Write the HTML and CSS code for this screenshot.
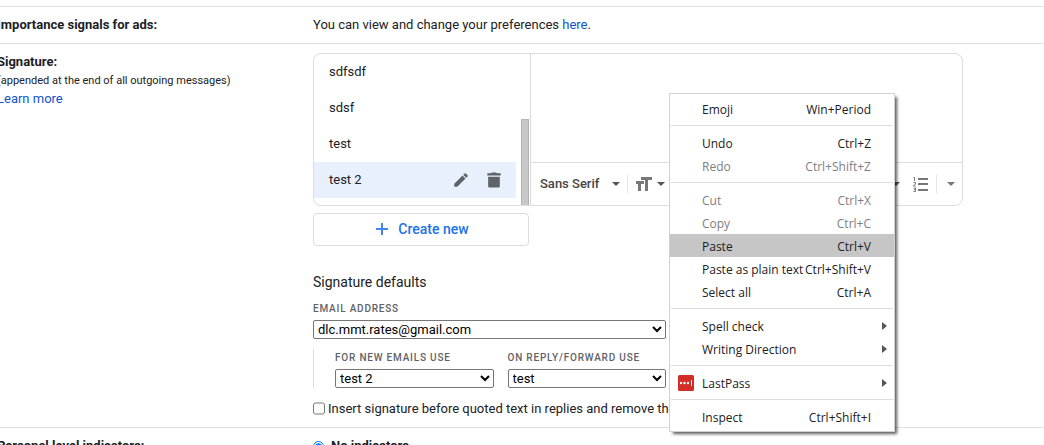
FILE: index.html
```html
<!DOCTYPE html>
<html lang="en">
<head>
    <meta charset="UTF-8">
    <meta name="viewport" content="width=device-width, initial-scale=1.0">
    <title>Settings</title>
    <link rel="stylesheet" href="styles.css">
</head>
<body>
    <main class="settings">
        <section class="row">
            <h2 class="row-title">Importance signals for ads:</h2>
            <p class="row-text">You can view and change your preferences <a href="#">here</a>.</p>
        </section>

        <section class="row row-signature">
            <div class="row-label">
                <h2 class="row-title">Signature:</h2>
                <p class="hint">(appended at the end of all outgoing messages)</p>
                <a href="#">Learn more</a>
            </div>
            <div class="row-content">
                <div class="signature-box">
                    <div class="signature-side">
                        <ul class="signature-list">
                            <li>sdfsdf</li>
                            <li>sdsf</li>
                            <li>test</li>
                            <li class="selected">
                                <span>test 2</span>
                                <button class="icon-btn" type="button" aria-label="Edit">
                                    <svg width="18" height="18" viewBox="0 0 24 24"><path d="M3 17v4h4L18 10l-4-4L3 17zM20.700 7.300a1.200 1.200 0 0 0 0-1.700l-2.300-2.300a1.200 1.200 0 0 0-1.700 0L15 5l4 4 1.700-1.700z"/></svg>
                                </button>
                                <button class="icon-btn" type="button" aria-label="Delete">
                                    <svg width="20" height="20" viewBox="0 0 24 24"><path d="M5 8v11.500c0 .9.700 1.500 1.500 1.500h11c.8 0 1.500-.6 1.500-1.500V8z"/><path d="M15.500 4l-1-1h-5l-1 1H4v2.500h16V4z"/></svg>
                                </button>
                            </li>
                        </ul>
                        <div class="scrollbar"></div>
                    </div>
                    <div class="editor">
                        <div class="editor-text" contenteditable="true" spellcheck="false"></div>
                        <div class="toolbar">
                            <div class="tools">
                                <button class="tool font-tool" type="button">Sans Serif <i class="caret"></i></button>
                                <span class="divider"></span>
                                <button class="tool" type="button" aria-label="Size">
                                    <svg width="16" height="14" viewBox="0 0 16 14"><path d="M5 0h11v3h-4v11H9V3H5zM0 4h8v3H5v7H2V7H0z"/></svg>
                                    <i class="caret"></i>
                                </button>
                            </div>
                            <div class="tools">
                                <button class="tool" type="button" aria-label="Align"><i class="caret"></i></button>
                                <button class="tool list-tool" type="button" aria-label="Numbered list">
                                    <svg width="16" height="15" viewBox="0 0 16 15"><path d="M5 1h10v2H5zM5 6h10v2H5zM5 12h10v2H5z"/><path class="digits" d="M.5 .5h1V4M.5 5.500h2v1.500l-2 2h2.200M.5 11h2v3.500h-2M1 12.700h1.500"/></svg>
                                </button>
                                <span class="divider"></span>
                                <button class="tool" type="button" aria-label="More options"><i class="caret light"></i></button>
                            </div>
                        </div>
                    </div>
                </div>
                <button class="create-btn" type="button">
                    <svg width="12" height="12" viewBox="0 0 12 12"><path d="M6 0v12M0 6h12"/></svg>
                    Create new
                </button>

                <h3 class="defaults-title">Signature defaults</h3>
                <div class="defaults">
                    <div class="field">
                        <label for="email">EMAIL ADDRESS</label>
                        <select id="email"><option>dlc.mmt.rates@gmail.com</option></select>
                    </div>
                    <div class="usage">
                        <div class="field">
                            <label for="newUse">FOR NEW EMAILS USE</label>
                            <select id="newUse"><option>test 2</option></select>
                        </div>
                        <div class="field">
                            <label for="replyUse">ON REPLY/FORWARD USE</label>
                            <select id="replyUse"><option>test</option></select>
                        </div>
                    </div>
                </div>
                <label class="check">
                    <input type="checkbox">
                    Insert signature before quoted text in replies and remove the
                </label>
            </div>
        </section>

        <section class="row">
            <h2 class="row-title">Personal level indicators:</h2>
            <label class="radio"><input type="radio" name="indicators" checked> No indicators</label>
        </section>
    </main>

    <div class="menu" role="menu">
        <button role="menuitem">Emoji <kbd>Win+Period</kbd></button>
        <hr>
        <button role="menuitem">Undo <kbd>Ctrl+Z</kbd></button>
        <button role="menuitem" disabled>Redo <kbd>Ctrl+Shift+Z</kbd></button>
        <hr>
        <button role="menuitem" disabled>Cut <kbd>Ctrl+X</kbd></button>
        <button role="menuitem" disabled>Copy <kbd>Ctrl+C</kbd></button>
        <button role="menuitem" class="active">Paste <kbd>Ctrl+V</kbd></button>
        <button role="menuitem">Paste as plain text <kbd>Ctrl+Shift+V</kbd></button>
        <button role="menuitem">Select all <kbd>Ctrl+A</kbd></button>
        <hr>
        <button role="menuitem" class="submenu">Spell check</button>
        <button role="menuitem" class="submenu">Writing Direction</button>
        <hr>
        <button role="menuitem" class="submenu with-icon">
            <svg width="16" height="16" viewBox="0 0 16 16"><rect width="16" height="16" rx="1.500" fill="#d32d27"/><g fill="#fff"><circle cx="3" cy="8" r="1.200"/><circle cx="6.500" cy="8" r="1.200"/><circle cx="10" cy="8" r="1.200"/><rect x="13" y="5" width="1" height="6"/></g></svg>
            LastPass
        </button>
        <hr>
        <button role="menuitem">Inspect <kbd>Ctrl+Shift+I</kbd></button>
    </div>
</body>
</html>
```
FILE: styles.css
```css
* {
    box-sizing: border-box;
}
body {
    margin: 0;
    height: 100vh;
    overflow: hidden;
    background: #fff;
    color: #202124;
    font-family: Roboto, Arial, sans-serif;
    font-size: 13px;
    line-height: 18px;
}
h2, h3, p, ul {
    margin: 0;
    padding: 0;
}
a {
    color: #15c;
    text-decoration: none;
}
button {
    margin: 0;
    padding: 0;
    border: 0;
    background: none;
    color: inherit;
    font: inherit;
}
svg {
    display: block;
}

/* settings rows */
.settings {
    padding-top: 6px;
    margin-left: -3px;
}
.row {
    display: grid;
    grid-template-columns: 316px 1fr;
    border-top: 1px solid #e0e0e0;
    padding: 9px 0;
}
.row-title {
    font-size: 13px;
    font-weight: 700;
}
.hint {
    font-size: 11px;
    line-height: 19px;
}
.row-content {
    max-width: 650px;
}

/* signature editor */
.signature-box {
    display: flex;
    height: 153px;
    border: 1px solid #dadce0;
    border-radius: 8px;
    overflow: hidden;
}
.signature-side {
    display: flex;
    justify-content: space-between;
    width: 217px;
    border-right: 1px solid #dadce0;
}
.signature-list {
    width: 202px;
    list-style: none;
}
.signature-list li {
    display: flex;
    align-items: center;
    height: 36px;
    padding: 0 12px 0 15px;
    font-size: 13px;
}
.signature-list span {
    flex: 1;
}
.selected {
    background: #e8f0fe;
}
.icon-btn {
    display: flex;
    justify-content: center;
    width: 20px;
    margin-left: 13px;
    fill: #5f6368;
}
.scrollbar {
    align-self: flex-end;
    width: 8px;
    height: 86px;
    margin-right: 1px;
    background: #c8c8c8;
    border: 1px solid #b4b4b4;
    border-bottom: 0;
}
.editor {
    flex: 1;
    display: flex;
    flex-direction: column;
}
.editor-text {
    flex: 1;
}
.toolbar {
    display: flex;
    justify-content: space-between;
    height: 43px;
    padding: 0 7px 0 9px;
    border-top: 1px solid #dadce0;
}
.tools {
    display: flex;
    align-items: center;
}
.tool {
    display: flex;
    align-items: center;
    gap: 5px;
    color: #444;
    fill: #777;
    font-weight: 500;
}
.font-tool {
    gap: 13px;
}
.list-tool {
    margin-left: 13px;
}
.digits {
    fill: none;
    stroke: #777;
}
.caret {
    border: 4px solid transparent;
    border-top-color: #555;
    border-bottom: 0;
}
.light {
    border-top-color: #777;
}
.divider {
    width: 1px;
    height: 18px;
    margin: 0 8px 0 7px;
    background: #e4e4e4;
}
.tools:last-child .divider {
    margin-right: 10px;
}
.create-btn {
    display: flex;
    align-items: center;
    justify-content: center;
    gap: 10px;
    width: 216px;
    height: 33px;
    margin-top: 7px;
    padding: 0 0 2px 3px;
    border: 1px solid #dadce0;
    border-radius: 4px;
    color: #1a73e8;
    font-size: 14px;
    font-weight: 500;
}
.create-btn svg {
    fill: none;
    stroke: #4285f4;
    stroke-width: 2;
}

/* signature defaults */
.defaults-title {
    margin-top: 27px;
    font-size: 14px;
    font-weight: 400;
}
.defaults {
    max-width: 353px;
}
.field {
    flex: 1;
    padding-top: 9px;
}
.field label {
    display: block;
    margin-bottom: 2px;
    color: #5f6368;
    font-size: 10px;
    font-weight: 500;
    letter-spacing: 0.8px;
}
.field select {
    display: block;
    width: 100%;
    height: 19px;
    padding: 0;
    border: 1px solid #767676;
    border-radius: 2px;
    background: #fff;
    color: #000;
    font-family: Roboto, Arial, sans-serif;
    font-size: 13px;
}
.usage {
    display: flex;
    gap: 14px;
    margin-top: 10px;
    padding-left: 21px;
    border-left: 1px solid #dadce0;
}
.usage .field {
    padding-top: 0;
}
.check, .radio {
    display: flex;
    align-items: center;
    white-space: nowrap;
}
.check {
    gap: 3px;
    margin: 12px 0 0;
}
.check input {
    width: 12px;
    height: 13px;
    margin: 0 0 2px;
}
.radio {
    gap: 7px;
    font-weight: 700;
}
.radio input {
    width: 11px;
    height: 13px;
    margin: 0;
}

/* context menu */
.menu {
    position: absolute;
    top: 93px;
    left: 669px;
    width: 226px;
    padding: 3px 0;
    border: 1px solid #d0d1d4;
    background: #fff;
    box-shadow: 3px 3px 3px -1px rgba(0, 0, 0, 0.65);
    color: #202124;
    font-family: "Open Sans", "Noto Sans", sans-serif;
    font-size: 12px;
}
.menu button {
    display: flex;
    align-items: center;
    justify-content: space-between;
    width: 100%;
    height: 23px;
    padding: 2px 23px 0 32px;
    white-space: nowrap;
}
.menu button:disabled {
    color: #7d8084;
}
.menu .active {
    background: #c6c6c6;
}
.menu kbd {
    font: inherit;
}
.menu hr {
    height: 1px;
    margin: 5px 1px;
    border: 0;
    background: #dadce0;
}
.submenu::after {
    content: "";
    margin: 0 -16px 2px 0;
    border: 4px solid transparent;
    border-left: 5px solid #555;
    border-right: 0;
}
.menu .with-icon {
    justify-content: flex-start;
    gap: 8px;
    padding-left: 8px;
}
.with-icon svg {
    margin-bottom: 2px;
}
.with-icon::after {
    margin-left: auto;
}
```
